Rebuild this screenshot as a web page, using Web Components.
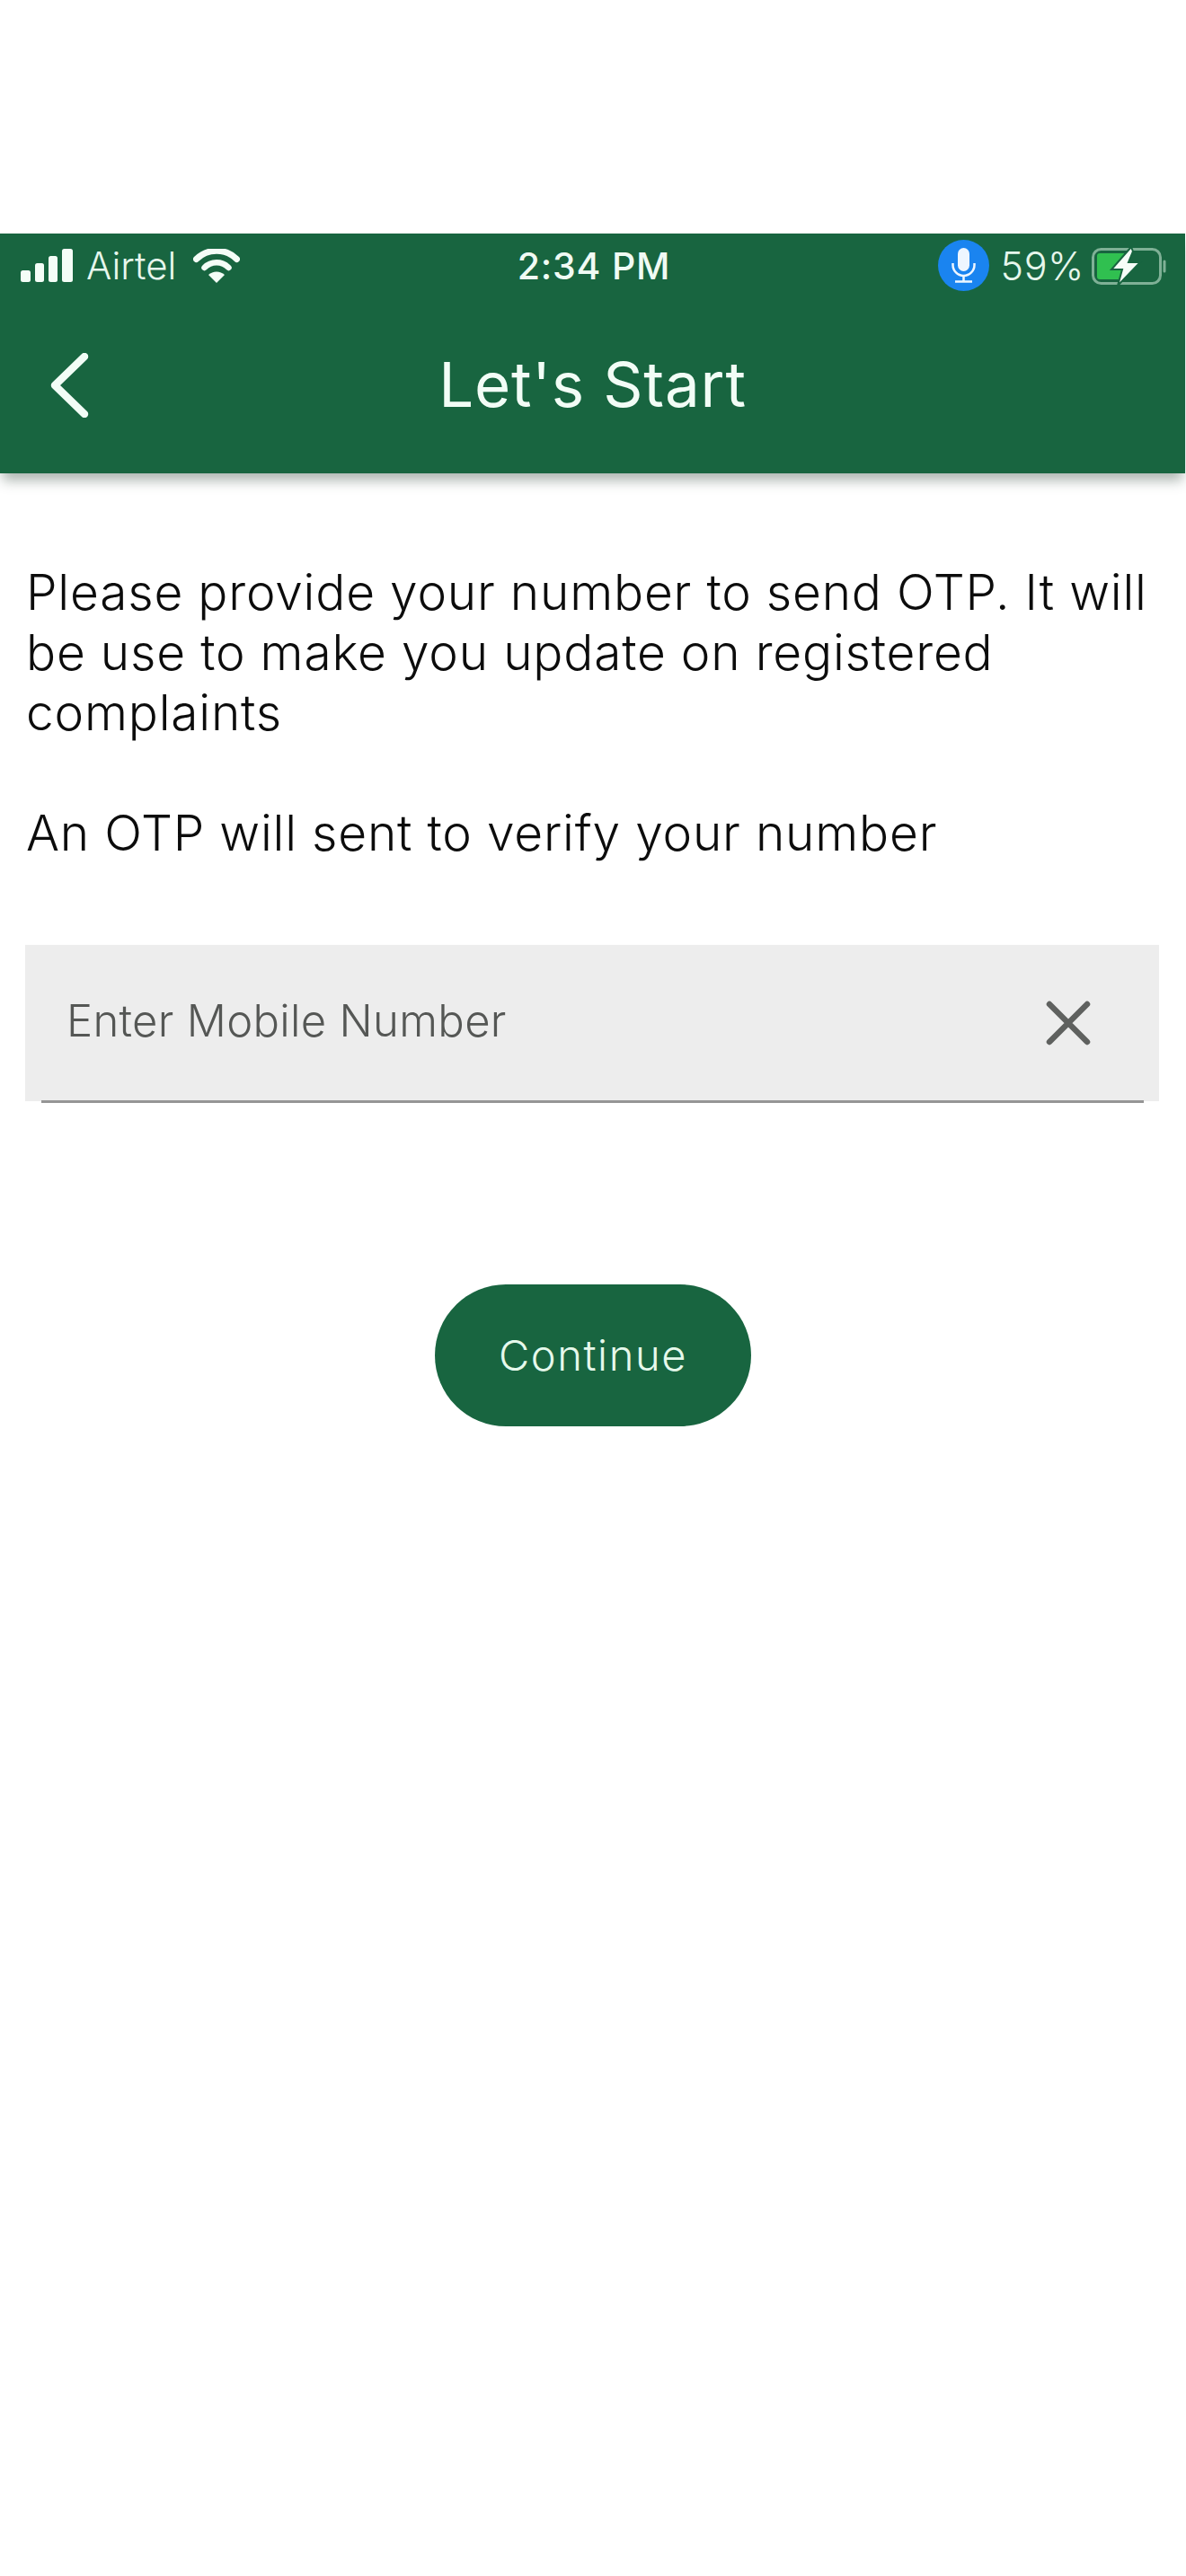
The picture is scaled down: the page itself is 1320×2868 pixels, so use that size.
<!DOCTYPE html>
<html>
<head>
<meta charset="utf-8">
<title>Let's Start</title>
<style>
  html, body { margin: 0; background: #fff; }
  body { font-family: Inter, Roboto, "Liberation Sans", sans-serif; }
</style>
</head>
<body>
<otp-page>
  <app-header title="Let's Start"></app-header>
  <intro-text>
    <p>Please provide your number to send OTP. It will be use to make you update on registered complaints</p>
    <p>An OTP will sent to verify your number</p>
  </intro-text>
  <phone-field placeholder="Enter Mobile Number"></phone-field>
  <pill-button>Continue</pill-button>
</otp-page>

<script>
const GREEN = "#186540";

class OtpPage extends HTMLElement {
  constructor() {
    super();
    this.attachShadow({ mode: "open" });
    this.shadowRoot.innerHTML = `
      <style>
        :host {
          display: flex;
          flex-direction: column;
          width: 1320px;
          min-height: 2868px;
          padding-top: 260px;
          box-sizing: border-box;
          background: #fff;
          color: #1c1c1c;
        }
      </style>
      <slot></slot>
    `;
  }
}

class StatusBar extends HTMLElement {
  constructor() {
    super();
    this.attachShadow({ mode: "open" });
    this.shadowRoot.innerHTML = `
      <style>
        :host {
          display: grid;
          grid-template-columns: 1fr auto 1fr;
          align-items: center;
          height: 70px;
          padding: 1px 20px 0 23px;
          box-sizing: border-box;
          font-size: 42px;
          color: #e6f7ec;
        }
        .left, .right { display: flex; align-items: center; }
        .right { justify-content: flex-end; }
        .carrier { margin-left: 15px; font-weight: 300; }
        .wifi { margin-left: 19px; }
        .time { font-weight: 500; font-size: 41px; letter-spacing: .8px; color: #f0fbf4; }
        .pct { margin: 0 8px 0 13px; font-size: 43px; font-weight: 300; letter-spacing: .6px; }
        svg { display: block; }
      </style>
      <div class="left">
        <svg width="58" height="38" viewBox="0 0 58 38">
          <rect x="0" y="24" width="11" height="13" rx="2.5" fill="#f4fdf7"/>
          <rect x="16" y="16" width="10" height="21" rx="2.5" fill="#f4fdf7"/>
          <rect x="31" y="8" width="10" height="29" rx="2.5" fill="#f4fdf7"/>
          <rect x="46" y="0" width="12" height="37" rx="2.5" fill="#f4fdf7"/>
        </svg>
        <span class="carrier">Airtel</span>
        <svg class="wifi" width="52" height="38" viewBox="0 0 52 38">
          <path d="M3.500 11.500 A32 32 0 0 1 48.500 11.500" fill="none" stroke="#f4fdf7" stroke-width="7" stroke-linecap="round"/>
          <path d="M12.500 21 A19 19 0 0 1 39.500 21" fill="none" stroke="#f4fdf7" stroke-width="6.500" stroke-linecap="round"/>
          <path d="M26 38 L17 29 A13 13 0 0 1 35 29 Z" fill="#f4fdf7"/>
        </svg>
      </div>
      <div class="time">2:34 PM</div>
      <div class="right">
        <svg width="57" height="57" viewBox="0 0 57 57">
          <circle cx="28.500" cy="28.500" r="28.500" fill="#1a84f0"/>
          <rect x="22" y="9" width="13" height="26" rx="6.500" fill="#eef6ff"/>
          <path d="M16.500 26 V28 A12 12 0 0 0 40.500 28 V26" fill="none" stroke="#eef6ff" stroke-width="2.500"/>
          <path d="M28.500 40 V46 M19 46.500 H38" fill="none" stroke="#eef6ff" stroke-width="2.500"/>
        </svg>
        <span class="pct">59%</span>
        <svg width="84" height="44" viewBox="0 0 84 44">
          <rect x="1.500" y="3.500" width="75" height="38" rx="9" fill="none" stroke="#7fb096" stroke-width="3"/>
          <path d="M6 11 a3 3 0 0 1 3 -3 H36 V37 H9 a3 3 0 0 1 -3 -3 Z" fill="#30c050"/>
          <path d="M81 17 V28" fill="none" stroke="#7fb096" stroke-width="3" stroke-linecap="round"/>
          <path d="M44 1 L22 26 H34 L29 44 L54 18 H41 L46 6 Z" fill="#f6fdf8" stroke="#186540" stroke-width="2"/>
        </svg>
      </div>
    `;
  }
}

class AppHeader extends HTMLElement {
  constructor() {
    super();
    this.attachShadow({ mode: "open" });
  }

  connectedCallback() {
    this.shadowRoot.innerHTML = `
      <style>
        :host {
          display: block;
          width: 1319px;
          height: 267px;
          background: ${GREEN};
          box-shadow: 0 11px 13px -3px rgba(60, 80, 70, .42);
          color: #f2fdf6;
        }
        .bar {
          display: grid;
          grid-template-columns: 1fr auto 1fr;
          align-items: center;
          height: 197px;
        }
        .back { margin-left: 55px; }
        h1 {
          margin: 0;
          font-size: 69px;
          line-height: 1;
          font-weight: 400;
          letter-spacing: .8px;
        }
        svg { display: block; }
      </style>
      <status-bar></status-bar>
      <div class="bar">
        <svg class="back" width="44" height="72" viewBox="0 0 44 72">
          <path d="M39 4 L6 36 L39 68" fill="none" stroke="#f2fdf6" stroke-width="8.500" stroke-linecap="round" stroke-linejoin="round"/>
        </svg>
        <h1>${this.getAttribute("title")}</h1>
        <span></span>
      </div>
    `;
  }
}

class IntroText extends HTMLElement {
  constructor() {
    super();
    this.attachShadow({ mode: "open" });
    this.shadowRoot.innerHTML = `
      <style>
        :host {
          display: block;
          padding: 99px 29px 0;
          font-size: 55px;
          font-weight: 340;
          line-height: 67px;
          letter-spacing: .8px;
          color: #0c0c0c;
        }
        ::slotted(p) { margin: 0 0 67px; }
        ::slotted(p:last-child) { margin-bottom: 0; }
      </style>
      <slot></slot>
    `;
  }
}

class PhoneField extends HTMLElement {
  constructor() {
    super();
    this.attachShadow({ mode: "open" });
  }

  connectedCallback() {
    this.shadowRoot.innerHTML = `
      <style>
        :host {
          display: block;
          width: 1262px;
          height: 174px;
          margin: 91px 0 0 28px;
          position: relative;
          background: #ededed;
        }
        .inner {
          display: flex;
          align-items: center;
          justify-content: space-between;
          height: 100%;
          padding: 0 76px 0 46px;
          box-sizing: border-box;
        }
        .hint {
          margin-bottom: 6px;
          font-size: 49px;
          font-weight: 300;
          letter-spacing: .3px;
          color: #555755;
        }
        .line {
          position: absolute;
          left: 18px;
          right: 17px;
          bottom: -2px;
          height: 3px;
          background: #959595;
        }
        svg { display: block; }
      </style>
      <div class="inner">
        <span class="hint">${this.getAttribute("placeholder")}</span>
        <svg width="50" height="50" viewBox="0 0 50 50">
          <path d="M4 4 L46 46 M46 4 L4 46" stroke="#5f615f" stroke-width="6.500" stroke-linecap="round"/>
        </svg>
      </div>
      <div class="line"></div>
    `;
  }
}

class PillButton extends HTMLElement {
  constructor() {
    super();
    this.attachShadow({ mode: "open" });
    this.shadowRoot.innerHTML = `
      <style>
        :host {
          display: flex;
          align-self: center;
          align-items: center;
          justify-content: center;
          width: 352px;
          height: 158px;
          margin-top: 204px;
          padding-bottom: 2px;
          box-sizing: border-box;
          border-radius: 79px;
          background: ${GREEN};
          color: #e6f9ec;
          font-size: 47px;
          font-weight: 300;
          letter-spacing: 1.6px;
        }
      </style>
      <slot></slot>
    `;
  }
}

customElements.define("otp-page", OtpPage);
customElements.define("status-bar", StatusBar);
customElements.define("app-header", AppHeader);
customElements.define("intro-text", IntroText);
customElements.define("phone-field", PhoneField);
customElements.define("pill-button", PillButton);
</script>
</body>
</html>
